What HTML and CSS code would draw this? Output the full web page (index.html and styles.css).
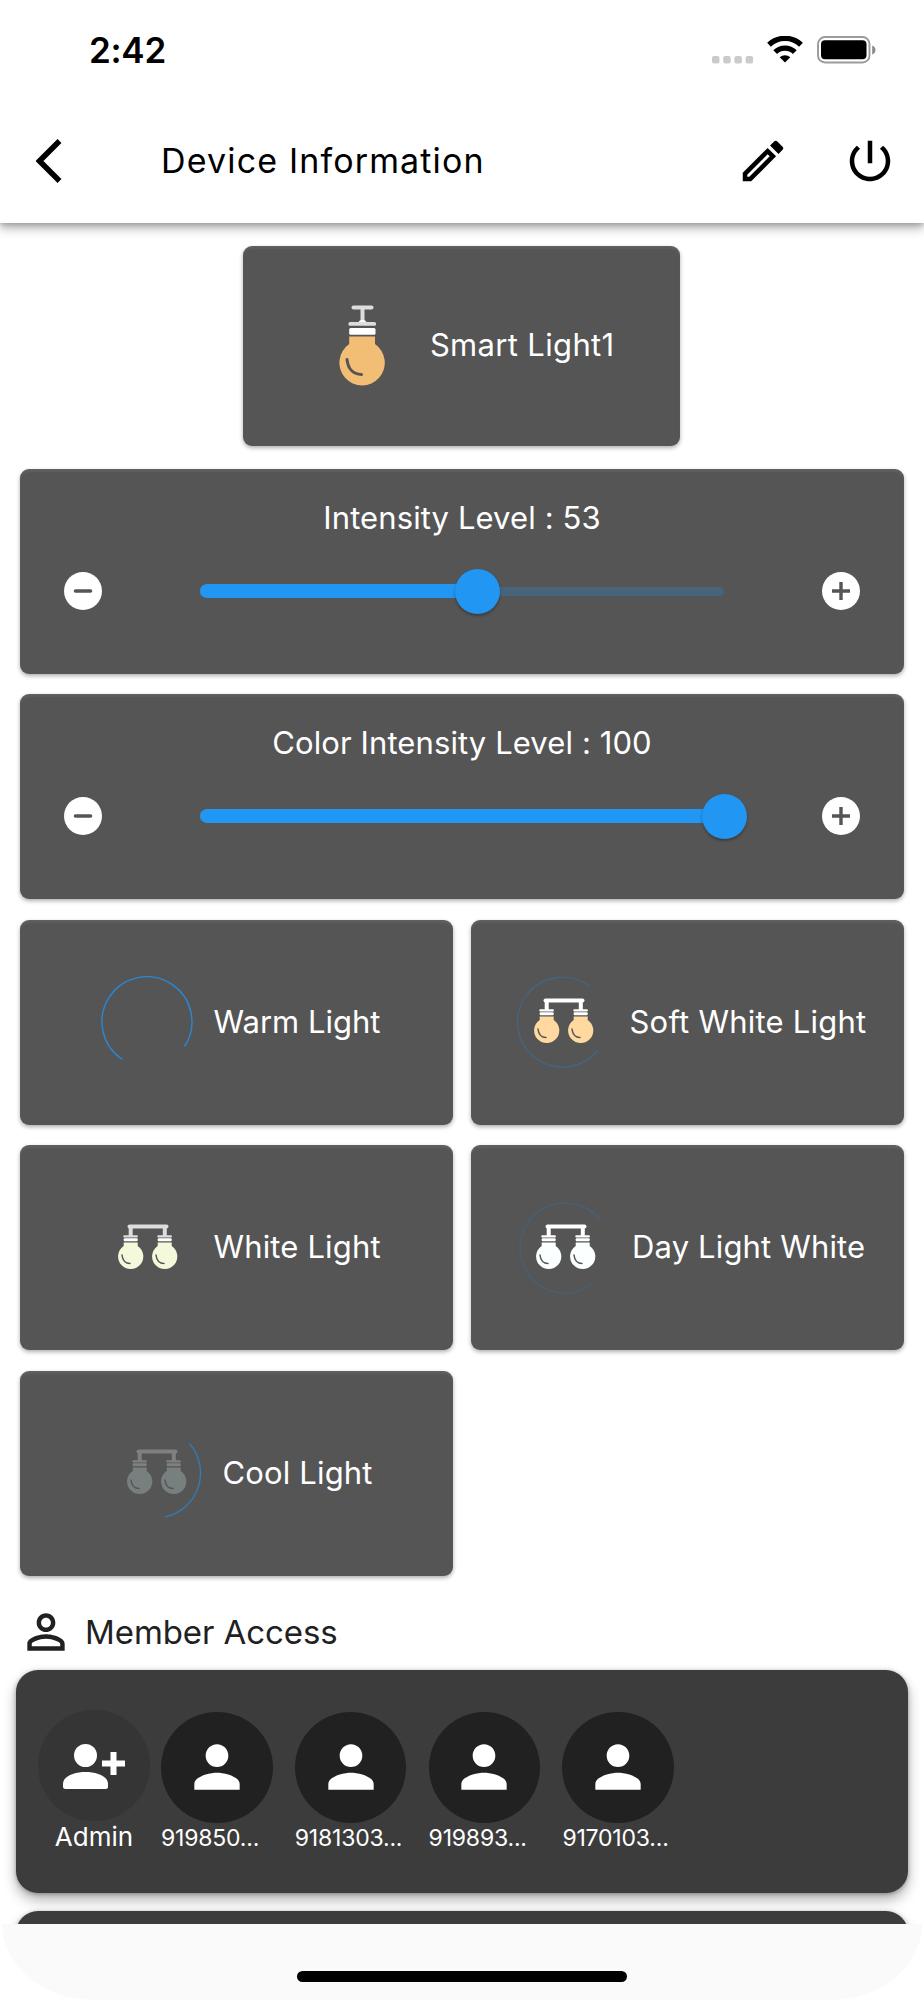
FILE: index.html
```html
<!DOCTYPE html>
<html lang="en">
<head>
<meta charset="utf-8">
<title>Device Information</title>
<link rel="stylesheet" href="styles.css">
</head>
<body>
<svg class="defs" width="0" height="0" aria-hidden="true">
  <symbol id="bulb-pair" viewBox="0 0 60 46">
    <g class="fitting">
      <rect x="9.500" y="0.500" width="41" height="4" rx="2"/>
      <rect x="10.700" y="2" width="4" height="11"/>
      <rect x="44.800" y="2" width="4" height="11"/>
      <rect x="5.300" y="11.300" width="14.600" height="2.300" rx="1"/>
      <rect x="39.300" y="11.300" width="14.600" height="2.300" rx="1"/>
    </g>
    <g fill="#fff">
      <rect x="5.700" y="14.300" width="14" height="3" rx="1"/>
      <rect x="39.700" y="14.300" width="14" height="3" rx="1"/>
    </g>
    <g fill="currentColor">
      <path d="M5.700 18.500H19.700V22A12.600 12.600 0 1 1 5.700 22Z"/>
      <path d="M39.700 18.500H53.700V22A12.600 12.600 0 1 1 39.700 22Z"/>
    </g>
    <g fill="none" stroke="#555" stroke-width="1.500" stroke-linecap="round">
      <path d="M4 31C4.500 36 7.500 39.500 12 39.500"/>
      <path d="M38 31C38.500 36 41.500 39.500 46 39.500"/>
    </g>
  </symbol>
  <symbol id="person" viewBox="0 0 24 24"><path fill="currentColor" d="M12 12c2.210 0 4-1.790 4-4s-1.790-4-4-4-4 1.790-4 4 1.790 4 4 4zm0 2c-2.670 0-8 1.340-8 4v2h16v-2c0-2.660-5.330-4-8-4z"/></symbol>
  <symbol id="minus" viewBox="0 0 38 38"><circle cx="19" cy="19" r="19" fill="#fff"/><path d="M11.500 19H26.500" stroke="#555" stroke-width="3.600" stroke-linecap="round"/></symbol>
  <symbol id="plus" viewBox="0 0 38 38"><circle cx="19" cy="19" r="19" fill="#fff"/><path d="M10 19H28M19 10V28" stroke="#555" stroke-width="3.400"/></symbol>
</svg>

<header class="top">
  <div class="status">
    <span class="clock">2:42</span>
    <div class="signals">
      <svg class="cell" width="42" height="8" fill="#cbcbcb"><rect width="7.500" height="7.500" rx="2"/><rect x="11.200" width="7.500" height="7.500" rx="2"/><rect x="22.400" width="7.500" height="7.500" rx="2"/><rect x="33.600" width="7.500" height="7.500" rx="2"/></svg>
      <svg class="wifi" width="36" height="27" viewBox="0 0 36 27" fill="none" stroke="#000" stroke-width="5.400"><path d="M2 8.700A23.300 23.300 0 0 1 34 8.700"/><path d="M8.200 16.100A14 14 0 0 1 27.800 16.100"/><path fill="#000" stroke="none" d="M12.700 21.300A7.600 7.600 0 0 1 23.300 21.300L18 26.500Z"/></svg>
      <svg class="battery" width="60" height="28" viewBox="0 0 60 28"><rect x="1" y="1" width="51.500" height="25.500" rx="7" fill="none" stroke="#9b9b9b" stroke-width="1.900"/><rect x="4" y="4.200" width="45.500" height="19" rx="4" fill="#000"/><path d="M55.200 9.500C59.500 11 59.500 17 55.200 18.500Z" fill="#8a8a8a"/></svg>
    </div>
  </div>
  <div class="appbar">
    <svg class="back" width="26" height="44" viewBox="0 0 26 44"><path d="M23.500 2L3.500 22L23.500 42" fill="none" stroke="#000" stroke-width="5.500"/></svg>
    <h1>Device Information</h1>
    <svg class="edit" width="54" height="54" viewBox="0 0 24 24"><path d="M14.060 9.020l.92.920L5.920 19H5v-.920l9.060-9.060M17.660 3c-.250 0-.510.100-.700.290l-1.830 1.830 3.750 3.750 1.830-1.830c.390-.390.390-1.020 0-1.410l-2.340-2.340c-.200-.200-.450-.290-.710-.290zm-3.600 3.190L3 17.250V21h3.750L17.810 9.940l-3.750-3.750z"/></svg>
    <svg class="power" width="54" height="54" viewBox="0 0 24 24"><path d="M13 3h-2v10h2V3zm4.830 2.170l-1.420 1.420C17.990 7.860 19 9.810 19 12c0 3.870-3.130 7-7 7s-7-3.130-7-7c0-2.190 1.010-4.140 2.580-5.420L6.170 5.170C4.230 6.820 3 9.260 3 12c0 4.970 4.030 9 9 9s9-4.030 9-9c0-2.740-1.230-5.180-3.170-6.830z"/></svg>
  </div>
</header>

<main class="content">
  <section class="card device">
    <svg class="bulb" width="46" height="81" viewBox="0 0 46 81">
      <rect x="12.500" y="0.500" width="22" height="4" rx="2" fill="#ddd"/><rect x="21.500" y="3" width="4" height="15" fill="#ddd"/><path d="M19.500 18a4 3 0 0 1 8 0z" fill="#fff"/>
      <rect x="9.500" y="17" width="27.500" height="3.700" rx="1.500" fill="#ddd"/><rect x="10.200" y="23" width="26.300" height="6.800" rx="1.500" fill="#fff"/>
      <path d="M10.200 31.500H36V39A22.700 22.700 0 1 1 10.200 39Z" fill="#f2bd74"/>
      <path d="M8 54.500C9 64 14.500 69.500 22.500 69.500" fill="none" stroke="#555" stroke-width="3" stroke-linecap="round"/>
    </svg>
    <span class="name">Smart Light1</span>
  </section>

  <section class="card level">
    <h2>Intensity Level : 53</h2>
    <div class="control">
      <svg class="step"><use href="#minus"/></svg>
      <div class="track"><div class="fill" style="width:53%"></div><div class="thumb" style="left:53%"></div></div>
      <svg class="step"><use href="#plus"/></svg>
    </div>
  </section>

  <section class="card level">
    <h2>Color Intensity Level : 100</h2>
    <div class="control">
      <svg class="step"><use href="#minus"/></svg>
      <div class="track"><div class="fill" style="width:100%"></div><div class="thumb" style="left:100%"></div></div>
      <svg class="step"><use href="#plus"/></svg>
    </div>
  </section>

  <section class="modes">
    <div class="card mode warm">
      <svg class="art" viewBox="0 0 92 92"><path class="ring" d="M21.500 83.500A45 45 0 1 1 83.500 70.500"/></svg>
      <span>Warm Light</span>
    </div>
    <div class="card mode soft">
      <svg class="art" viewBox="0 0 92 92"><path class="ring faint" d="M73 10.500A45 45 0 1 0 80.500 74.500"/><use href="#bulb-pair" x="17" y="22" width="60" height="46"/></svg>
      <span>Soft White Light</span>
    </div>
    <div class="card mode white">
      <svg class="art" viewBox="0 0 92 92"><use href="#bulb-pair" x="17" y="22" width="60" height="46"/></svg>
      <span>White Light</span>
    </div>
    <div class="card mode day">
      <svg class="art" viewBox="0 0 92 92"><path class="ring fainter" d="M80.800 17.500A45 45 0 1 0 73.500 81.700"/><use href="#bulb-pair" x="17" y="22" width="60" height="46"/></svg>
      <span>Day Light White</span>
    </div>
    <div class="card mode cool">
      <svg class="art" viewBox="0 0 92 92"><path class="ring half" d="M79.700 16.700A45 45 0 0 1 55 90"/><use href="#bulb-pair" x="17" y="22" width="60" height="46"/></svg>
      <span>Cool Light</span>
    </div>
  </section>

  <section class="members">
    <div class="heading">
      <svg width="56" height="56" viewBox="0 0 24 24"><path fill="#212121" d="M12 5.900c1.160 0 2.100.940 2.100 2.100s-.940 2.100-2.100 2.100S9.900 9.160 9.900 8s.940-2.100 2.100-2.100m0 9c2.970 0 6.100 1.460 6.100 2.100v1.100H5.900V17c0-.640 3.130-2.100 6.100-2.100M12 4C9.790 4 8 5.790 8 8s1.790 4 4 4 4-1.790 4-4-1.790-4-4-4zm0 9c-2.670 0-8 1.340-8 4v3h16v-3c0-2.660-5.330-4-8-4z"/></svg>
      <h2>Member Access</h2>
    </div>
    <div class="panel">
      <div class="member admin">
        <div class="avatar"><svg width="68" height="48" viewBox="0 0 68 48" fill="#fff"><circle cx="25.500" cy="14.500" r="11.500"/><path d="M3 43C3 35 15 31 25.500 31S48 35 48 43V45.500A2.500 2.500 0 0 1 45.500 48H5.500A2.500 2.500 0 0 1 3 45.500Z"/><path d="M50.500 11H56.500V19.500H65V25.500H56.500V34H50.500V25.500H42V19.500H50.500Z"/></svg></div>
        <span>Admin</span>
      </div>
      <div class="member"><div class="avatar"><svg width="68" height="68"><use href="#person"/></svg></div><span>919850...</span></div>
      <div class="member"><div class="avatar"><svg width="68" height="68"><use href="#person"/></svg></div><span>9181303...</span></div>
      <div class="member"><div class="avatar"><svg width="68" height="68"><use href="#person"/></svg></div><span>919893...</span></div>
      <div class="member"><div class="avatar"><svg width="68" height="68"><use href="#person"/></svg></div><span>9170103...</span></div>
    </div>
    <div class="panel next"></div>
  </section>
</main>

<footer class="home"><div class="indicator"></div></footer>
</body>
</html>
```

FILE: styles.css
```css
* { box-sizing: border-box; }
body { margin: 0; width: 924px; height: 2000px; overflow: hidden; background: #fff; font-family: Inter, "Liberation Sans", sans-serif; display: flex; flex-direction: column; }
svg { display: block; flex: none; }
.defs { position: absolute; }
h1, h2 { margin: 0; font-weight: 400; white-space: nowrap; }
span { white-space: nowrap; }

.top { height: 223px; flex: none; background: #fff; box-shadow: 0 5px 10px rgba(0,0,0,.32), 0 2px 4px rgba(0,0,0,.14); position: relative; z-index: 1; }
.status { height: 100px; padding: 0 47px 0 89px; display: flex; justify-content: space-between; align-items: center; }
.clock { font-size: 35px; font-weight: 600; letter-spacing: -.3px; }
.signals { display: flex; align-items: flex-start; height: 28px; }
.cell { margin-top: 20px; }
.wifi { margin-left: 13px; }
.battery { margin-left: 14px; }
.appbar { height: 123px; padding: 0 27px 1px 36px; display: flex; align-items: center; }
h1 { margin: -1px 0 0 99px; font-size: 34px; letter-spacing: 1.150px; }
.edit { margin-left: auto; }
.power { margin-left: 53px; }

.content { height: 1701px; flex: none; overflow: hidden; padding: 22.500px 16px 0; }
.card { background: #555; border-radius: 9px; color: #fff; box-shadow: 0 2px 4px rgba(0,0,0,.32), inset 0 3px 2px rgba(255,255,255,.06); font-size: 31px; }
.card span { margin-top: -2px; }
.device { width: 437px; height: 200.500px; margin: 0 0 0 227.400px; display: flex; align-items: center; padding: 0 0 0 95.500px; }
.bulb { margin-top: -1px; }
.device .name { margin-left: 45px; letter-spacing: .33px; }
.level { height: 205px; margin: 23px 4px 0; padding: 29.500px 44px 0; }
.level + .level { margin-top: 20.400px; }
h2 { font-size: 31px; line-height: 38px; }
.level h2 { text-align: center; letter-spacing: .1px; }
.control { display: flex; align-items: center; margin-top: 35.500px; }
.step { width: 38px; height: 38px; }
.track { position: relative; width: 524px; margin: 0 auto; height: 9px; }
.track::before { content: ""; display: block; height: 9px; border-radius: 0 5px 5px 0; background: #48647a; }
.fill { position: absolute; left: 0; top: -2.500px; height: 14px; border-radius: 7px; background: #2196f3; }
.thumb { position: absolute; top: 4.500px; width: 45px; height: 45px; margin: -22.500px 0 0 -22.500px; border-radius: 50%; background: #2196f3; box-shadow: 0 2px 3px rgba(0,0,0,.3); }

.modes { display: grid; grid-template-columns: 433px 433px; column-gap: 18px; row-gap: 20.500px; margin: 20.200px 4px 0; }
.mode { height: 205px; display: flex; align-items: center; }
.art { width: 92px; height: 92px; }
.art + span { margin-left: 21px; letter-spacing: .15px; }
.warm, .white { padding-left: 80.500px; }
.warm .art + span { letter-spacing: 0; }
.soft { padding-left: 45.500px; }
.soft .art + span { letter-spacing: .23px; }
.day { padding-left: 48px; }
.cool { padding-left: 89.500px; }
.ring { fill: none; stroke: #2a87d3; stroke-width: 1.400px; }
.faint { stroke: #456480; }
.fainter { stroke: #476075; }
.half { stroke: #347ab3; }
.fitting { fill: var(--fitting, #fff); }
.soft .art { color: #ffd9a0; }
.white .art { color: #f5f9dc; --fitting: #ddd; }
.day .art { color: #fbffff; }
.cool use { opacity: .25; }
.cool .art { color: #e0fffb; }

.heading { display: flex; align-items: center; height: 56px; margin-top: 28.500px; padding-left: 2px; }
.heading h2 { margin-left: 11px; color: #212121; font-size: 33px; letter-spacing: -.08px; }
.panel { height: 223px; margin-top: 9.500px; border-radius: 22px; background: #3c3c3c; box-shadow: 0 7px 13px rgba(0,0,0,.3), 0 1px 4px rgba(0,0,0,.3); display: flex; padding: 40px 22px 0; color: #fff; }
.next { margin-top: 18px; }
.member { width: 133.800px; padding-top: 2px; }
.admin { width: 123px; padding: 0; }
.avatar { width: 111.500px; height: 111.500px; border-radius: 50%; background: #212121; display: flex; align-items: center; justify-content: center; color: #fff; }
.admin .avatar { background: #353535; }
.member span { display: block; font-size: 23px; line-height: 30px; letter-spacing: -.2px; }
.admin span { width: 112px; text-align: center; font-size: 26px; line-height: 31px; letter-spacing: 0; }

.home { height: 76px; flex: none; margin: 0 2px; background: #fafafa; border-radius: 0 0 92px 92px / 0 0 76px 76px; display: flex; justify-content: center; padding-top: 47px; }
.indicator { width: 330px; height: 11px; border-radius: 6px; background: #000; }
```
